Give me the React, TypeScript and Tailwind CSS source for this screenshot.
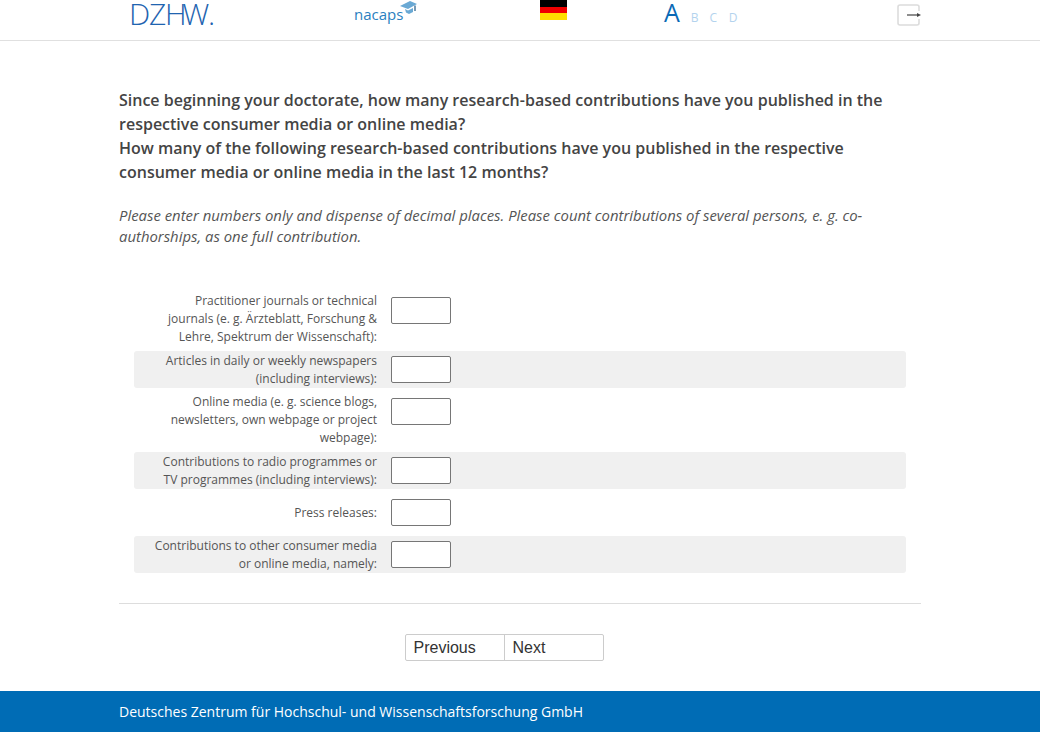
const rows = [
  { label: "Practitioner journals or technical journals (e. g. Ärzteblatt, Forschung & Lehre, Spektrum der Wissenschaft):", shaded: false },
  { label: "Articles in daily or weekly newspapers (including interviews):", shaded: true },
  { label: "Online media (e. g. science blogs, newsletters, own webpage or project webpage):", shaded: false },
  { label: "Contributions to radio programmes or TV programmes (including interviews):", shaded: true },
  { label: "Press releases:", shaded: false },
  { label: "Contributions to other consumer media or online media, namely:", shaded: true },
];

const App = () => {
  return (
    <div className="flex h-[732px] w-[1040px] flex-col overflow-hidden bg-white font-['Open_Sans',sans-serif] text-[#444]">
      <header className="h-[41px] shrink-0 border-b border-[#e0e0e0]">
        <div className="mx-auto flex h-10 w-[802px] items-start">
          <div className="ml-[10px] w-[225px] text-[30px] leading-[28px] font-light tracking-[-1.2px] text-[#1f64b0]">
            DZH<span className="-ml-[3px]">W.</span>
          </div>
          <div className="flex w-[186px] items-start">
            <span className="mt-[4px] text-[15px] leading-5 text-[#2a7fc0]">nacaps</span>
            <svg width="17" height="14" viewBox="0 0 17 14" className="mt-[1px] -ml-[3px]">
              <path d="M0 5 L10 0 L17 3 L8 8 Z" fill="#6aa9d4" />
              <path d="M5 8 L8 9.5 L13 7 V11 L9 13 L6 11.5 Z" fill="#6aa9d4" />
              <path d="M15 4.5 V10" stroke="#3d6f96" strokeWidth="1.4" />
            </svg>
          </div>
          <div className="flex w-[124px] flex-col">
            <div className="h-[7px] w-[27px] bg-black" />
            <div className="h-[6px] w-[27px] bg-[#f00000]" />
            <div className="h-[7px] w-[27px] bg-[#ffdf00]" />
          </div>
          <div className="flex w-[233px] items-baseline text-[#0a6ab6]">
            <span className="text-[25px] leading-[25px]">A</span>
            <span className="ml-[11px] text-[12px] text-[#b3d3ee]">B</span>
            <span className="ml-[11px] text-[12px] text-[#b3d3ee]">C</span>
            <span className="ml-[11.5px] text-[12px] text-[#b3d3ee]">D</span>
          </div>
          <svg width="24" height="24" viewBox="0 0 24 24" className="mt-[3px]">
            <path
              d="M22 8 V4 Q22 2 20 2 H3 Q1 2 1 4 V20 Q1 22 3 22 H20 Q22 22 22 20 V16"
              fill="none"
              stroke="#dcdcdc"
              strokeWidth="1.6"
            />
            <path d="M10 12 H21" stroke="#444" strokeWidth="1.2" />
            <path d="M20 10 L24 12 L20 14 Z" fill="#444" />
          </svg>
        </div>
      </header>

      <main className="mx-auto flex w-[802px] flex-1 flex-col">
        <h1 className="mt-[47px] text-[16px] leading-6 font-semibold text-[#444]">
          Since beginning your doctorate, how many research-based contributions have you published in the respective consumer media or online media?
          <br />
          How many of the following research-based contributions have you published in the respective consumer media or online media in the last 12 months?
        </h1>
        <p className="mt-[21px] text-[14.88px] leading-[21px] text-[#555] italic">
          Please enter numbers only and dispense of decimal places. Please count contributions of several persons, e. g. co-authorships, as one full contribution.
        </p>

        <div className="mt-[45px] ml-[15px] flex w-[772px] flex-col gap-[5px]">
          {rows.map((row) => (
            <div
              key={row.label}
              className={`flex items-center rounded-[3px] ${row.shaded ? "bg-[#f0f0f0]" : ""}`}
            >
              <label className="ml-[17px] w-[226px] text-right text-[12px] leading-[18px] text-[#555]">
                {row.label}
              </label>
              <input
                type="text"
                className="mt-[5px] mb-[5px] ml-[14px] h-[27px] w-[60px] self-start rounded-[2px] border border-[#767676] bg-white"
              />
            </div>
          ))}
        </div>

        <hr className="mt-[30px] border-[#ddd]" />

        <div className="mt-[30px] ml-[286px] flex">
          <div className="flex h-[27px] w-[199px] rounded-[2px] border border-[#ccc] font-['Liberation_Sans',sans-serif] text-[16px] text-[#333]">
            <button className="w-[99px] border-r border-[#ccc] pt-[1px] pl-[7.5px] text-left">Previous</button>
            <button className="flex-1 pt-[1px] pl-[7.5px] text-left">Next</button>
          </div>
        </div>
      </main>

      <footer className="flex h-[41px] shrink-0 items-center bg-[#006cb5]">
        <div className="mx-auto w-[802px] text-[14px] text-white">
          Deutsches Zentrum für Hochschul- und Wissenschaftsforschung GmbH
        </div>
      </footer>
    </div>
  );
};

export default App;
